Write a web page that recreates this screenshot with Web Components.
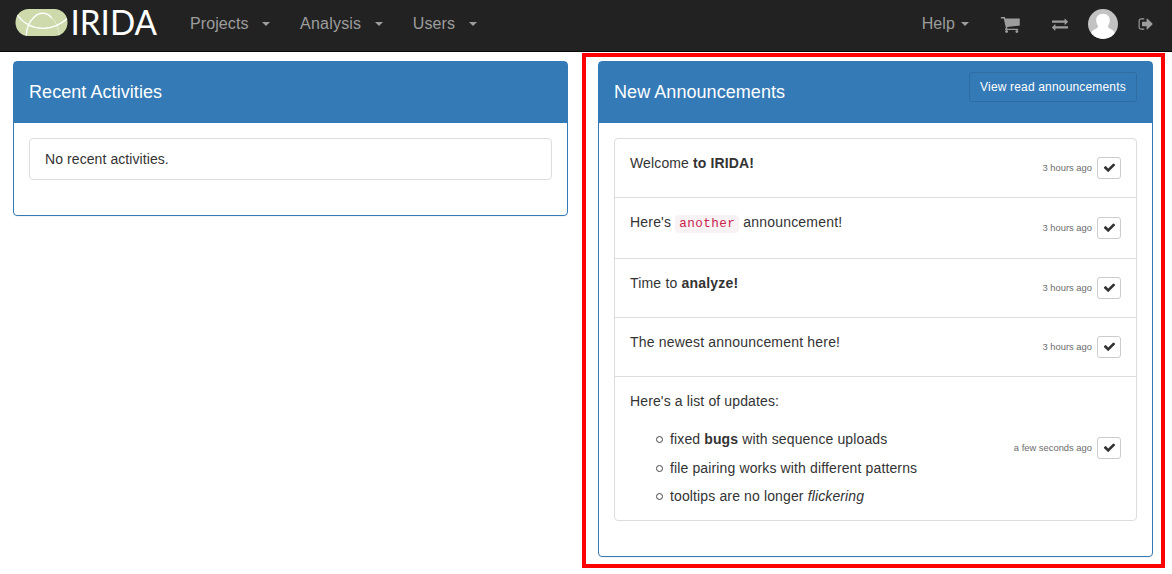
<!DOCTYPE html>
<html lang="en">
<head>
<meta charset="utf-8">
<title>IRIDA</title>
<style>
html,body{margin:0;padding:0}
body{font:14px/20px "Liberation Sans",Arial,sans-serif;color:#333;background:#fff;height:574px;overflow:hidden}
</style>
</head>
<body>
<irida-app></irida-app>
<script>
const define=(name,html,init)=>{
  const t=document.createElement('template');
  t.innerHTML=html;
  customElements.define(name,class extends HTMLElement{
    constructor(){super();this.attachShadow({mode:'open'}).append(t.content.cloneNode(true));}
    connectedCallback(){if(init)init(this,this.shadowRoot);}
  });
};

const ICONS={
  cart:'M704 1536q0 52-38 90t-90 38-90-38-38-90 38-90 90-38 90 38 38 90zm896 0q0 52-38 90t-90 38-90-38-38-90 38-90 90-38 90 38 38 90zm128-1088v512q0 24-16.5 42.5t-40.5 21.5l-1044 122q13 60 13 70 0 16-24 64h920q26 0 45 19t19 45-19 45-45 19h-1024q-26 0-45-19t-19-45q0-11 8-31.5t16-36 21.5-40 15.5-29.5l-177-823h-204q-26 0-45-19t-19-45 19-45 45-19h256q16 0 28.5 6.5t19.5 15.5 13 24.5 8 26 5.5 29.5 4.5 26h1201q26 0 45 19t19 45z',
  exchange:'M1792 1184v192q0 13-9.5 22.5t-22.5 9.5h-1376v192q0 13-9.5 22.5t-22.5 9.5q-12 0-24-10l-319-320q-9-9-9-22 0-14 9-23l320-320q9-9 23-9 13 0 22.5 9.5t9.5 22.5v192h1376q13 0 22.5 9.5t9.5 22.5zm0-544q0 14-9 23l-320 320q-9 9-23 9-13 0-22.5-9.5t-9.5-22.5v-192h-1376q-13 0-22.5-9.5t-9.5-22.5v-192q0-13 9.5-22.5t22.5-9.5h1376v-192q0-14 9-23t23-9q12 0 24 10l319 319q9 9 9 23z',
  signout:'M704 1440q0 4 1 20t.5 26.5-3 23.5-10 19.5-20.5 6.5h-320q-119 0-203.5-84.5t-84.5-203.5v-704q0-119 84.5-203.5t203.5-84.5h320q13 0 22.5 9.5t9.5 22.5q0 4 1 20t.5 26.5-3 23.5-10 19.5-20.5 6.5h-320q-66 0-113 47t-47 113v704q0 66 47 113t113 47h312l11.5 1 11.5 3 8 5.5 7 9 2 13.5zm928-544q0 26-19 45l-544 544q-19 19-45 19t-45-19-19-45v-288h-448q-26 0-45-19t-19-45v-384q0-26 19-45t45-19h448v-288q0-26 19-45t45-19 45 19l544 544q19 19 19 45z',
  check:'M1671 566q0 40-28 68l-724 724-136 136q-28 28-68 28t-68-28l-136-136-362-362q-28-28-28-68t28-68l136-136q28-28 68-28t68 28l294 295 656-657q28-28 68-28t68 28l136 136q28 28 28 68z'
};
define('fa-icon',`<style>:host{display:block;flex:none;width:var(--size,16px);height:var(--size,16px)}svg{display:block;width:100%;height:100%;fill:currentColor}</style>
<svg viewBox="0 0 1792 1792"><path/></svg>`,(el,r)=>r.querySelector('path').setAttribute('d',ICONS[el.getAttribute('name')]));

define('irida-logo',`<style>:host{display:block;width:146px;height:51px}svg{display:block;overflow:visible}</style>
<svg width="146" height="51" viewBox="0 -8 146 51">
<defs><clipPath id="pill"><rect x=".5" y="1" width="52" height="27" rx="13.2"/></clipPath></defs>
<g clip-path="url(#pill)"><rect width="53" height="30" fill="#cedaab"/>
<g fill="none" stroke="#fff">
<path d="M0 3.500C4 10 9 14.500 13.300 16.700C18 19.500 24 20.500 30 20.300C38 20 46 16 53 10" stroke-width="1.400"/>
<path d="M11 29C11.500 20 14 14 18.300 10C21 7 24 5.300 27.500 5.300C31 5.300 34.500 7 36.700 10" stroke-width="1.400"/>
<path d="M36.700 10C41 14 43.500 19 44 28" stroke-width=".6" opacity=".8"/>
</g></g>
<text x="55.500" y="27.400" fill="#fff" font-family="Lato,Open Sans,sans-serif" font-size="35.400" textLength="86.500" lengthAdjust="spacingAndGlyphs">IRIDA</text>
</svg>`);

define('nav-item',`<style>:host{display:flex;align-items:center;font-size:16px;line-height:20px;color:#9d9d9d;white-space:pre;letter-spacing:var(--track,.1px)}
i{width:0;height:0;border:4px solid transparent;border-top-color:currentColor;border-bottom:0;margin:1px 0 0 var(--caret-gap,13.500px)}</style><slot></slot><i></i>`);

define('user-avatar',`<style>:host{display:block;width:30px;height:30px;border-radius:50%;overflow:hidden;background:#c3c3c3}svg{display:block}</style>
<svg width="30" height="30" fill="#fff"><path d="M15 4.800c4.200 0 7 2.800 6.800 6.700-.1 2.200-.8 4-1.800 5.300-.3 1.200.2 2 1.500 2.600 3 1.300 5.200 2.600 5.700 6.600V30H2.800v-4c.5-4 2.700-5.300 5.700-6.600 1.300-.6 1.800-1.400 1.500-2.600-1-1.300-1.700-3.100-1.800-5.300C8 7.600 10.800 4.800 15 4.800z"/></svg>`);

define('nav-bar',`<style>
:host{display:flex;box-sizing:border-box;height:52px;background:#222;border-bottom:1px solid #080808;padding:0 18.500px 0 15px;color:#9d9d9d}
irida-logo{margin-right:29px}
nav{display:flex;align-items:center;height:47px}
.main{gap:30px}.side{margin-left:auto}
.an{--track:.2px}
.help{--caret-gap:6px;margin-right:30.500px}
.cart{--size:20.500px;margin:1px 32px 0 0}
.ex{margin-right:20px}
user-avatar{margin:1px 19.500px 0 0}
</style>
<irida-logo></irida-logo>
<nav class="main"><nav-item>Projects</nav-item><nav-item class="an">Analysis</nav-item><nav-item>Users</nav-item></nav>
<nav class="side"><nav-item class="help">Help</nav-item><fa-icon class="cart" name="cart"></fa-icon><fa-icon class="ex" name="exchange"></fa-icon><user-avatar></user-avatar><fa-icon name="signout"></fa-icon></nav>`);

define('info-panel',`<style>
:host{display:flex;flex-direction:column;box-sizing:border-box;width:555px;border:1px solid #337ab7;border-radius:4px;box-shadow:0 1px 1px rgba(0,0,0,.05)}
header{display:flex;justify-content:space-between;align-items:flex-start;height:51px;padding:10px 15px 0;background:#337ab7;color:#fff}
h2{margin:10px 0 0;font-size:18px;font-weight:400;line-height:20px;letter-spacing:.06px}
.body{padding:15px;flex:1}
.list{border:1px solid #ddd;border-radius:4px}
</style><header><h2></h2><slot name="action"></slot></header><div class="body"><div class="list"><slot></slot></div></div>`,
(el,r)=>r.querySelector('h2').textContent=el.getAttribute('heading'));

define('read-button',`<style>:host{display:block;box-sizing:border-box;width:168px;height:30px;border:1px solid #2e6da4;border-radius:3px;background:#337ab7;color:#fff;font-size:12px;line-height:28px;text-align:center;letter-spacing:.17px;white-space:nowrap}</style><slot></slot>`);

define('announcement-row',`<style>
:host{display:flex;align-items:center;box-sizing:border-box;padding:0 15px;border-bottom:1px solid #ddd;letter-spacing:var(--track,.13px)}
:host(:last-child){border-bottom:0;padding-bottom:1px}
.content{flex:1;align-self:flex-start;padding-top:14px}
time{font-size:9.400px;line-height:14px;color:#6c6c6c;margin-right:5px;white-space:nowrap;letter-spacing:0}
button{display:flex;align-items:center;justify-content:center;box-sizing:border-box;width:24px;height:22px;margin:0;padding:0;background:#fff;border:1px solid #ccc;border-radius:3px;color:#333;--size:13px}
fa-icon{margin:0 0 .5px 0}
</style><div class="content"><slot></slot></div><time></time><button aria-label="Mark as read"><fa-icon name="check"></fa-icon></button>`,
(el,r)=>r.querySelector('time').textContent=el.getAttribute('when'));

define('code-tag',`<style>:host{display:inline;font:12.600px/18px "Liberation Mono",monospace;letter-spacing:.44px;color:#c7254e;background:#f9f2f4;border-radius:4px;padding:2px 4px}</style><slot></slot>`);

define('irida-app',`<style>
:host{display:block}
main{display:flex;align-items:flex-start;padding:1px 7px 0 13px}
.recent{height:155px;margin-top:8px}
.empty{padding:10px 15px;height:20px;letter-spacing:.08px}
.highlight{box-sizing:border-box;width:583px;height:515px;margin-left:14px;border:4px solid red;padding:4px 8px 7px 12px}
.new{height:496px}
.short{height:59px}.tall{height:61px}.long{height:143px}
.wide{--track:.19px}
p{margin:0}
ul{margin:14px 0 0;padding:0 0 0 26px;list-style:none;line-height:28.500px}
li{display:flex;align-items:center;white-space:pre}
li::before{content:"";box-sizing:border-box;width:7px;height:7px;border:1.200px solid #444;border-radius:50%;margin:1px 7px 0 0}
</style>
<nav-bar></nav-bar>
<main>
<info-panel class="recent" heading="Recent Activities"><div class="empty">No recent activities.</div></info-panel>
<section class="highlight">
<info-panel class="new" heading="New Announcements">
<read-button slot="action">View read announcements</read-button>
<announcement-row class="short" when="3 hours ago">Welcome <b>to IRIDA!</b></announcement-row>
<announcement-row class="tall wide" when="3 hours ago">Here's <code-tag>another</code-tag> announcement!</announcement-row>
<announcement-row class="short wide" when="3 hours ago">Time to <b>analyze!</b></announcement-row>
<announcement-row class="short wide" when="3 hours ago">The newest announcement here!</announcement-row>
<announcement-row class="long" when="a few seconds ago"><p>Here's a list of updates:</p><ul><li>fixed <b>bugs</b> with sequence uploads</li><li>file pairing works with different patterns</li><li>tooltips are no longer <em>flickering</em></li></ul></announcement-row>
</info-panel>
</section>
</main>`);
</script>
</body>
</html>
